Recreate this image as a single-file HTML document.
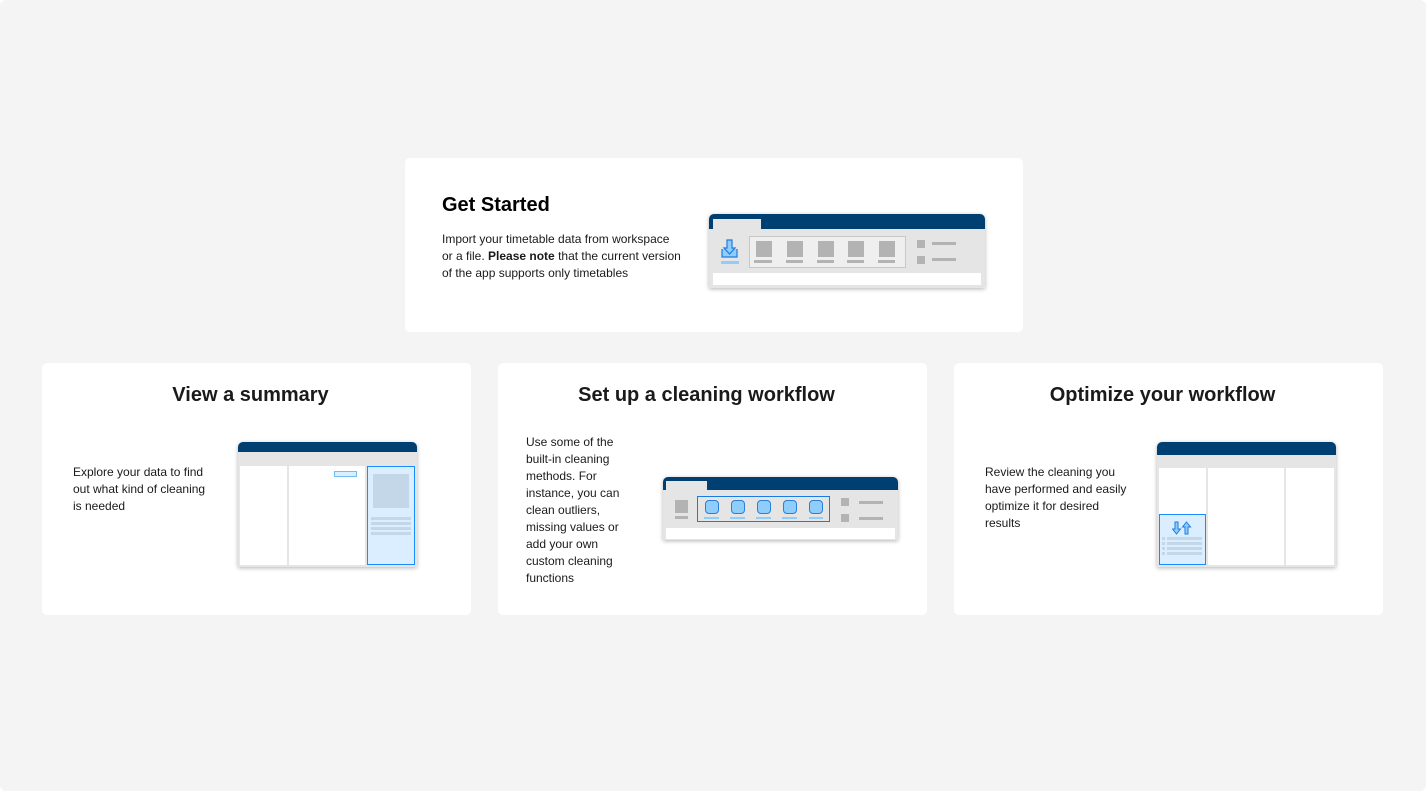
<!DOCTYPE html>
<html><head><meta charset="utf-8"><style>
*{box-sizing:border-box;margin:0;padding:0}
body{width:1426px;height:791px;background:#fff;font-family:"Liberation Sans",Arial,sans-serif;color:#1a1a1a;position:relative;overflow:hidden}
.bg{position:absolute;left:0;top:0;width:1426px;height:791px;background:#f4f4f4;border-radius:6px}
.card{position:absolute;background:#fff;border-radius:5px}
.a{position:absolute}
h2{position:absolute;font-size:20px;font-weight:bold;white-space:nowrap}
p{position:absolute;font-size:12px;line-height:17px;color:#1a1a1a}
.nav{background:#003f72}
.g{background:#b3b3b3}
.sh{box-shadow:0 1px 4px rgba(0,0,0,.3)}
</style></head><body>
<div class="bg"></div>
<div class="card" style="left:405px;top:158px;width:618px;height:174px"></div>
<div class="card" style="left:42px;top:363px;width:429px;height:252px"></div>
<div class="card" style="left:498px;top:363px;width:429px;height:252px"></div>
<div class="card" style="left:954px;top:363px;width:429px;height:252px"></div>

<h2 style="left:442px;top:194px;color:#000">Get Started</h2>
<p style="left:442px;top:231px;width:240px">Import your timetable data from workspace or a file. <b>Please note</b> that the current version of the app supports only timetables</p>

<!-- illus 1 -->
<div class="a sh" style="left:709px;top:214px;width:276px;height:74px;background:#e5e5e5;border-radius:5px 5px 0 0;overflow:hidden">
 <div class="a nav" style="left:0;top:0;width:276px;height:15px"></div>
 <div class="a" style="left:4px;top:5px;width:48px;height:10px;background:#e5e5e5"></div>
 <div class="a" style="left:4px;top:59px;width:268px;height:12px;background:#fff"></div>
 <svg class="a" style="left:12px;top:25px" width="18" height="25" viewBox="0 0 18 25"><path d="M1 10v8h15v-8" fill="#8fcdfb" stroke="#1e7be0" stroke-width="1.2"/><path d="M6 1h5v8h3l-5.5 6L3 9h3z" fill="#8fcdfb" stroke="#1e7be0" stroke-width="1.2"/><rect x="0" y="22" width="18" height="3" fill="#8fcdfb"/></svg>
 <div class="a" style="left:40px;top:22px;width:157px;height:32px;border:1px solid #c8c8c8;background:#efefef"></div>
 <div class="a g" style="left:47px;top:27px;width:16px;height:16px"></div><div class="a g" style="left:45px;top:46px;width:18px;height:3px"></div>
 <div class="a g" style="left:78px;top:27px;width:16px;height:16px"></div><div class="a g" style="left:77px;top:46px;width:17px;height:3px"></div>
 <div class="a g" style="left:109px;top:27px;width:16px;height:16px"></div><div class="a g" style="left:108px;top:46px;width:17px;height:3px"></div>
 <div class="a g" style="left:139px;top:27px;width:16px;height:16px"></div><div class="a g" style="left:138px;top:46px;width:17px;height:3px"></div>
 <div class="a g" style="left:170px;top:27px;width:16px;height:16px"></div><div class="a g" style="left:169px;top:46px;width:17px;height:3px"></div>
 <div class="a g" style="left:208px;top:26px;width:8px;height:8px"></div><div class="a g" style="left:223px;top:28px;width:24px;height:3px"></div>
 <div class="a g" style="left:208px;top:42px;width:8px;height:8px"></div><div class="a g" style="left:223px;top:44px;width:24px;height:3px"></div>
</div>

<h2 style="left:36px;width:429px;text-align:center;top:384px">View a summary</h2>
<p style="left:73px;top:464px;width:140px">Explore your data to find out what kind of cleaning is needed</p>
<div class="a sh" style="left:238px;top:442px;width:179px;height:125px;background:#e5e5e5;border-radius:5px 5px 0 0;overflow:hidden">
 <div class="a nav" style="left:0;top:0;width:179px;height:10px"></div>
 <div class="a" style="left:2px;top:24px;width:47px;height:99px;background:#fff"></div>
 <div class="a" style="left:51px;top:24px;width:76px;height:99px;background:#fff"></div>
 <div class="a" style="left:96px;top:29px;width:23px;height:6px;border:1px solid #6cbdfa;background:#dbeeff"></div>
 <div class="a" style="left:129px;top:24px;width:48px;height:99px;background:#dbeeff;border:1px solid #1a8cff"></div>
 <div class="a" style="left:135px;top:32px;width:36px;height:34px;background:#c3d7e8"></div>
 <div class="a" style="left:133px;top:75px;width:40px;height:3px;background:#c3d7e8"></div>
 <div class="a" style="left:133px;top:80px;width:40px;height:3px;background:#c3d7e8"></div>
 <div class="a" style="left:133px;top:85px;width:40px;height:3px;background:#c3d7e8"></div>
 <div class="a" style="left:133px;top:90px;width:40px;height:3px;background:#c3d7e8"></div>
</div>

<h2 style="left:492px;width:429px;text-align:center;top:384px">Set up a cleaning workflow</h2>
<p style="left:526px;top:434px;width:110px">Use some of the built-in cleaning methods. For instance, you can clean outliers, missing values or add your own custom cleaning functions</p>
<div class="a sh" style="left:663px;top:477px;width:235px;height:63px;background:#e5e5e5;border-radius:5px 5px 0 0;overflow:hidden">
 <div class="a nav" style="left:0;top:0;width:235px;height:13px"></div>
 <div class="a" style="left:3px;top:4px;width:41px;height:9px;background:#e5e5e5"></div>
 <div class="a" style="left:3px;top:51px;width:229px;height:11px;background:#fff"></div>
 <div class="a g" style="left:12px;top:23px;width:13px;height:13px"></div><div class="a g" style="left:12px;top:39px;width:13px;height:3px"></div>
 <div class="a" style="left:34px;top:19px;width:133px;height:26px;border:1px solid #1a7be0"></div>
 <div class="a" style="left:42px;top:23px;width:14px;height:14px;border-radius:4px;background:#8fcdfb;border:1px solid #2a7fd8"></div><div class="a" style="left:41px;top:40px;width:15px;height:2px;background:#8fcdfb"></div>
 <div class="a" style="left:68px;top:23px;width:14px;height:14px;border-radius:4px;background:#8fcdfb;border:1px solid #2a7fd8"></div><div class="a" style="left:67px;top:40px;width:15px;height:2px;background:#8fcdfb"></div>
 <div class="a" style="left:94px;top:23px;width:14px;height:14px;border-radius:4px;background:#8fcdfb;border:1px solid #2a7fd8"></div><div class="a" style="left:93px;top:40px;width:15px;height:2px;background:#8fcdfb"></div>
 <div class="a" style="left:120px;top:23px;width:14px;height:14px;border-radius:4px;background:#8fcdfb;border:1px solid #2a7fd8"></div><div class="a" style="left:119px;top:40px;width:15px;height:2px;background:#8fcdfb"></div>
 <div class="a" style="left:146px;top:23px;width:14px;height:14px;border-radius:4px;background:#8fcdfb;border:1px solid #2a7fd8"></div><div class="a" style="left:146px;top:40px;width:14px;height:2px;background:#8fcdfb"></div>
 <div class="a g" style="left:178px;top:21px;width:8px;height:8px"></div><div class="a g" style="left:196px;top:24px;width:24px;height:3px"></div>
 <div class="a g" style="left:178px;top:37px;width:8px;height:8px"></div><div class="a g" style="left:196px;top:40px;width:24px;height:3px"></div>
</div>

<h2 style="left:948px;width:429px;text-align:center;top:384px">Optimize your workflow</h2>
<p style="left:985px;top:464px;width:150px">Review the cleaning you have performed and easily optimize it for desired results</p>
<div class="a sh" style="left:1157px;top:442px;width:179px;height:125px;background:#e5e5e5;border-radius:5px 5px 0 0;overflow:hidden">
 <div class="a nav" style="left:0;top:0;width:179px;height:13px"></div>
 <div class="a" style="left:2px;top:26px;width:47px;height:97px;background:#fff"></div>
 <div class="a" style="left:51px;top:26px;width:76px;height:97px;background:#fff"></div>
 <div class="a" style="left:129px;top:26px;width:48px;height:97px;background:#fff"></div>
 <div class="a" style="left:2px;top:72px;width:47px;height:51px;background:#dbeeff;border:1px solid #1a8cff"></div>
 <svg class="a" style="left:15px;top:79px" width="20" height="14" viewBox="0 0 20 14"><path d="M3 1h3v7h2.5L4.5 13 0.5 8H3z" fill="#8fcdfb" stroke="#1e7be0" stroke-width="1"/><path d="M13 13h3V6h2.5l-4-5-4 5H13z" fill="#8fcdfb" stroke="#1e7be0" stroke-width="1"/></svg>
 <div class="a" style="left:5px;top:95px;width:3px;height:3px;background:#c3d7e8"></div><div class="a" style="left:10px;top:95px;width:35px;height:3px;background:#c3d7e8"></div>
 <div class="a" style="left:5px;top:100px;width:3px;height:3px;background:#c3d7e8"></div><div class="a" style="left:10px;top:100px;width:35px;height:3px;background:#c3d7e8"></div>
 <div class="a" style="left:5px;top:105px;width:3px;height:3px;background:#c3d7e8"></div><div class="a" style="left:10px;top:105px;width:35px;height:3px;background:#c3d7e8"></div>
 <div class="a" style="left:5px;top:110px;width:3px;height:3px;background:#c3d7e8"></div><div class="a" style="left:10px;top:110px;width:35px;height:3px;background:#c3d7e8"></div>
</div>
</body></html>
